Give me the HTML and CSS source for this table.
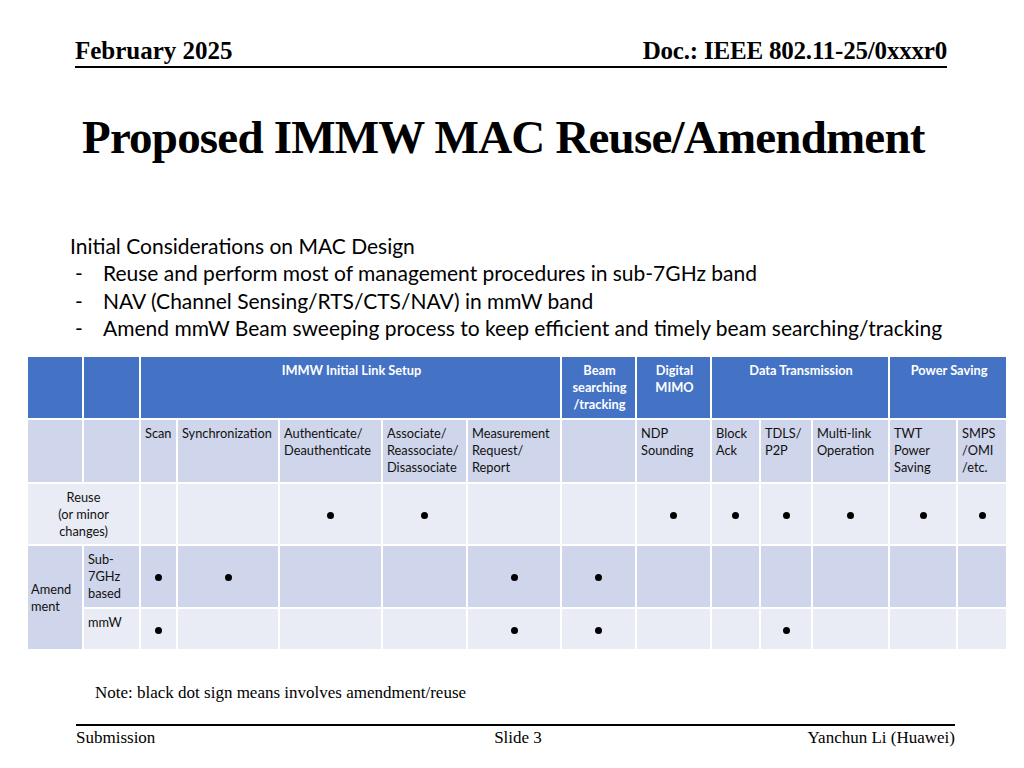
FILE: index.html
```html
<!DOCTYPE html>
<html>
<head>
<meta charset="utf-8">
<link rel="stylesheet" href="styles.css">
</head>
<body>
<div class="slide">
  <header class="top">
    <span class="date">February 2025</span>
    <span class="doc">Doc.: IEEE 802.11-25/0xxxr0</span>
  </header>
  <h1 class="title">Proposed IMMW MAC Reuse/Amendment</h1>
  <div class="intro">
    <p class="lead">Initial Considerations on MAC Design</p>
    <ul class="points">
      <li><span class="dash">-</span><span>Reuse and perform most of management procedures in sub-7GHz band</span></li>
      <li><span class="dash">-</span><span>NAV (Channel Sensing/RTS/CTS/NAV) in mmW band</span></li>
      <li><span class="dash">-</span><span>Amend mmW Beam sweeping process to keep efficient and timely beam searching/tracking</span></li>
    </ul>
  </div>
  <table class="grid">
    <colgroup>
      <col style="width:56px"><col style="width:57px"><col style="width:37px"><col style="width:102px">
      <col style="width:103px"><col style="width:85px"><col style="width:94px"><col style="width:75px">
      <col style="width:75px"><col style="width:49px"><col style="width:52px"><col style="width:77px">
      <col style="width:68px"><col style="width:50px">
    </colgroup>
    <tr class="head">
      <th></th><th></th>
      <th colspan="5">IMMW Initial Link Setup</th>
      <th>Beam<br>searching<br>/tracking</th>
      <th>Digital<br>MIMO</th>
      <th colspan="3">Data Transmission</th>
      <th colspan="2">Power Saving</th>
    </tr>
    <tr class="sub dark">
      <td></td><td></td>
      <td>Scan</td><td>Synchronization</td><td>Authenticate/<br>Deauthenticate</td>
      <td>Associate/<br>Reassociate/<br>Disassociate</td><td>Measurement<br>Request/<br>Report</td>
      <td></td><td>NDP<br>Sounding</td><td>Block<br>Ack</td><td>TDLS/<br>P2P</td>
      <td>Multi-link<br>Operation</td><td>TWT<br>Power<br>Saving</td><td>SMPS<br>/OMI<br>/etc.</td>
    </tr>
    <tr class="light r3">
      <td colspan="2" class="label-c">Reuse<br>(or minor<br>changes)</td>
      <td></td><td></td><td class="m"><span class="dot"></span></td><td class="m"><span class="dot"></span></td>
      <td></td><td></td><td class="m"><span class="dot"></span></td><td class="m"><span class="dot"></span></td>
      <td class="m"><span class="dot"></span></td><td class="m"><span class="dot"></span></td>
      <td class="m"><span class="dot"></span></td><td class="m"><span class="dot"></span></td>
    </tr>
    <tr class="dark r4">
      <td rowspan="2" class="label-m">Amend<br>ment</td>
      <td>Sub-<br>7GHz<br>based</td>
      <td class="m"><span class="dot"></span></td><td class="m"><span class="dot"></span></td>
      <td></td><td></td><td class="m"><span class="dot"></span></td><td class="m"><span class="dot"></span></td>
      <td></td><td></td><td></td><td></td><td></td><td></td>
    </tr>
    <tr class="light r5">
      <td>mmW</td>
      <td class="m"><span class="dot"></span></td><td></td><td></td><td></td>
      <td class="m"><span class="dot"></span></td><td class="m"><span class="dot"></span></td>
      <td></td><td></td><td class="m"><span class="dot"></span></td><td></td><td></td><td></td>
    </tr>
  </table>
  <p class="note">Note: black dot sign means involves amendment/reuse</p>
  <footer class="bottom">
    <span>Submission</span>
    <span class="slide-no">Slide 3</span>
    <span class="author">Yanchun Li (Huawei)</span>
  </footer>
</div>
</body>
</html>
```
FILE: styles.css
```css
* { box-sizing: border-box; }
html, body { margin: 0; padding: 0; background: #fff; }
.slide {
  width: 1024px;
  height: 768px;
  position: relative;
  overflow: hidden;
  background: #fff;
  color: #000;
}
.top {
  margin: 0 77px 0 75px;
  padding-top: 35px;
  display: flex;
  justify-content: space-between;
  align-items: flex-end;
  border-bottom: 2px solid #000;
  font-family: "Liberation Serif", serif;
  font-weight: bold;
  font-size: 25px;
  line-height: 31px;
}
.doc { letter-spacing: -0.2px; }
.title {
  margin: 42px 0 0 0;
  padding-left: 82px;
  font-family: "Liberation Serif", serif;
  font-weight: bold;
  font-size: 47px;
  line-height: 54px;
  letter-spacing: -0.8px;
}
.intro {
  margin: 68px 0 0 70px;
  font-family: Lato, "Open Sans", sans-serif;
  font-size: 21px;
  line-height: 27.3px;
  color: #000;
}
.lead { margin: 0; }
.points { list-style: none; margin: 0; padding: 0; }
.points li { display: flex; }
.dash { width: 33px; padding-left: 5px; }
.grid {
  margin: 14px 0 0 26px;
  width: 980px;
  table-layout: fixed;
  border-collapse: collapse;
  font-family: Lato, "Open Sans", sans-serif;
  font-size: 12.8px;
  line-height: 17px;
}
.grid th, .grid td {
  border: 2px solid #fff;
  padding: 5px 2px 0 4px;
  vertical-align: top;
  text-align: left;
  overflow: hidden;
  white-space: nowrap;
}
.grid .head th {
  background: #4472c4;
  color: #fff;
  font-weight: bold;
  text-align: center;
  height: 63px;
}
.grid .dark td { background: #cfd5ea; color: #111; }
.grid .light td { background: #e9ebf5; color: #111; }
.grid .sub td { height: 64px; padding-top: 5px; }
.grid .r3 td { height: 62px; }
.grid .r4 td { height: 63px; }
.grid .r5 td { height: 42px; }
.grid td.m { text-align: center; vertical-align: middle; padding: 0; }
.grid td.label-c { text-align: center; vertical-align: middle; padding: 0; }
.grid td.label-m { vertical-align: middle; padding: 0 2px 0 3px; background: #cfd5ea; }
.dot {
  display: inline-block;
  width: 7px;
  height: 7px;
  border-radius: 50%;
  background: #000;
  vertical-align: middle;
}
.note {
  margin: 32px 0 0 95px;
  font-family: "Liberation Serif", serif;
  font-size: 17px;
  line-height: 20px;
}
.bottom {
  margin: 21px 69px 0 76px;
  padding-top: 2px;
  border-top: 2px solid #000;
  display: grid;
  grid-template-columns: 1fr auto 1fr;
  font-family: "Liberation Serif", serif;
  font-size: 17px;
  line-height: 20px;
}
.slide-no { margin-left: 5px; }
.author { text-align: right; }
```
